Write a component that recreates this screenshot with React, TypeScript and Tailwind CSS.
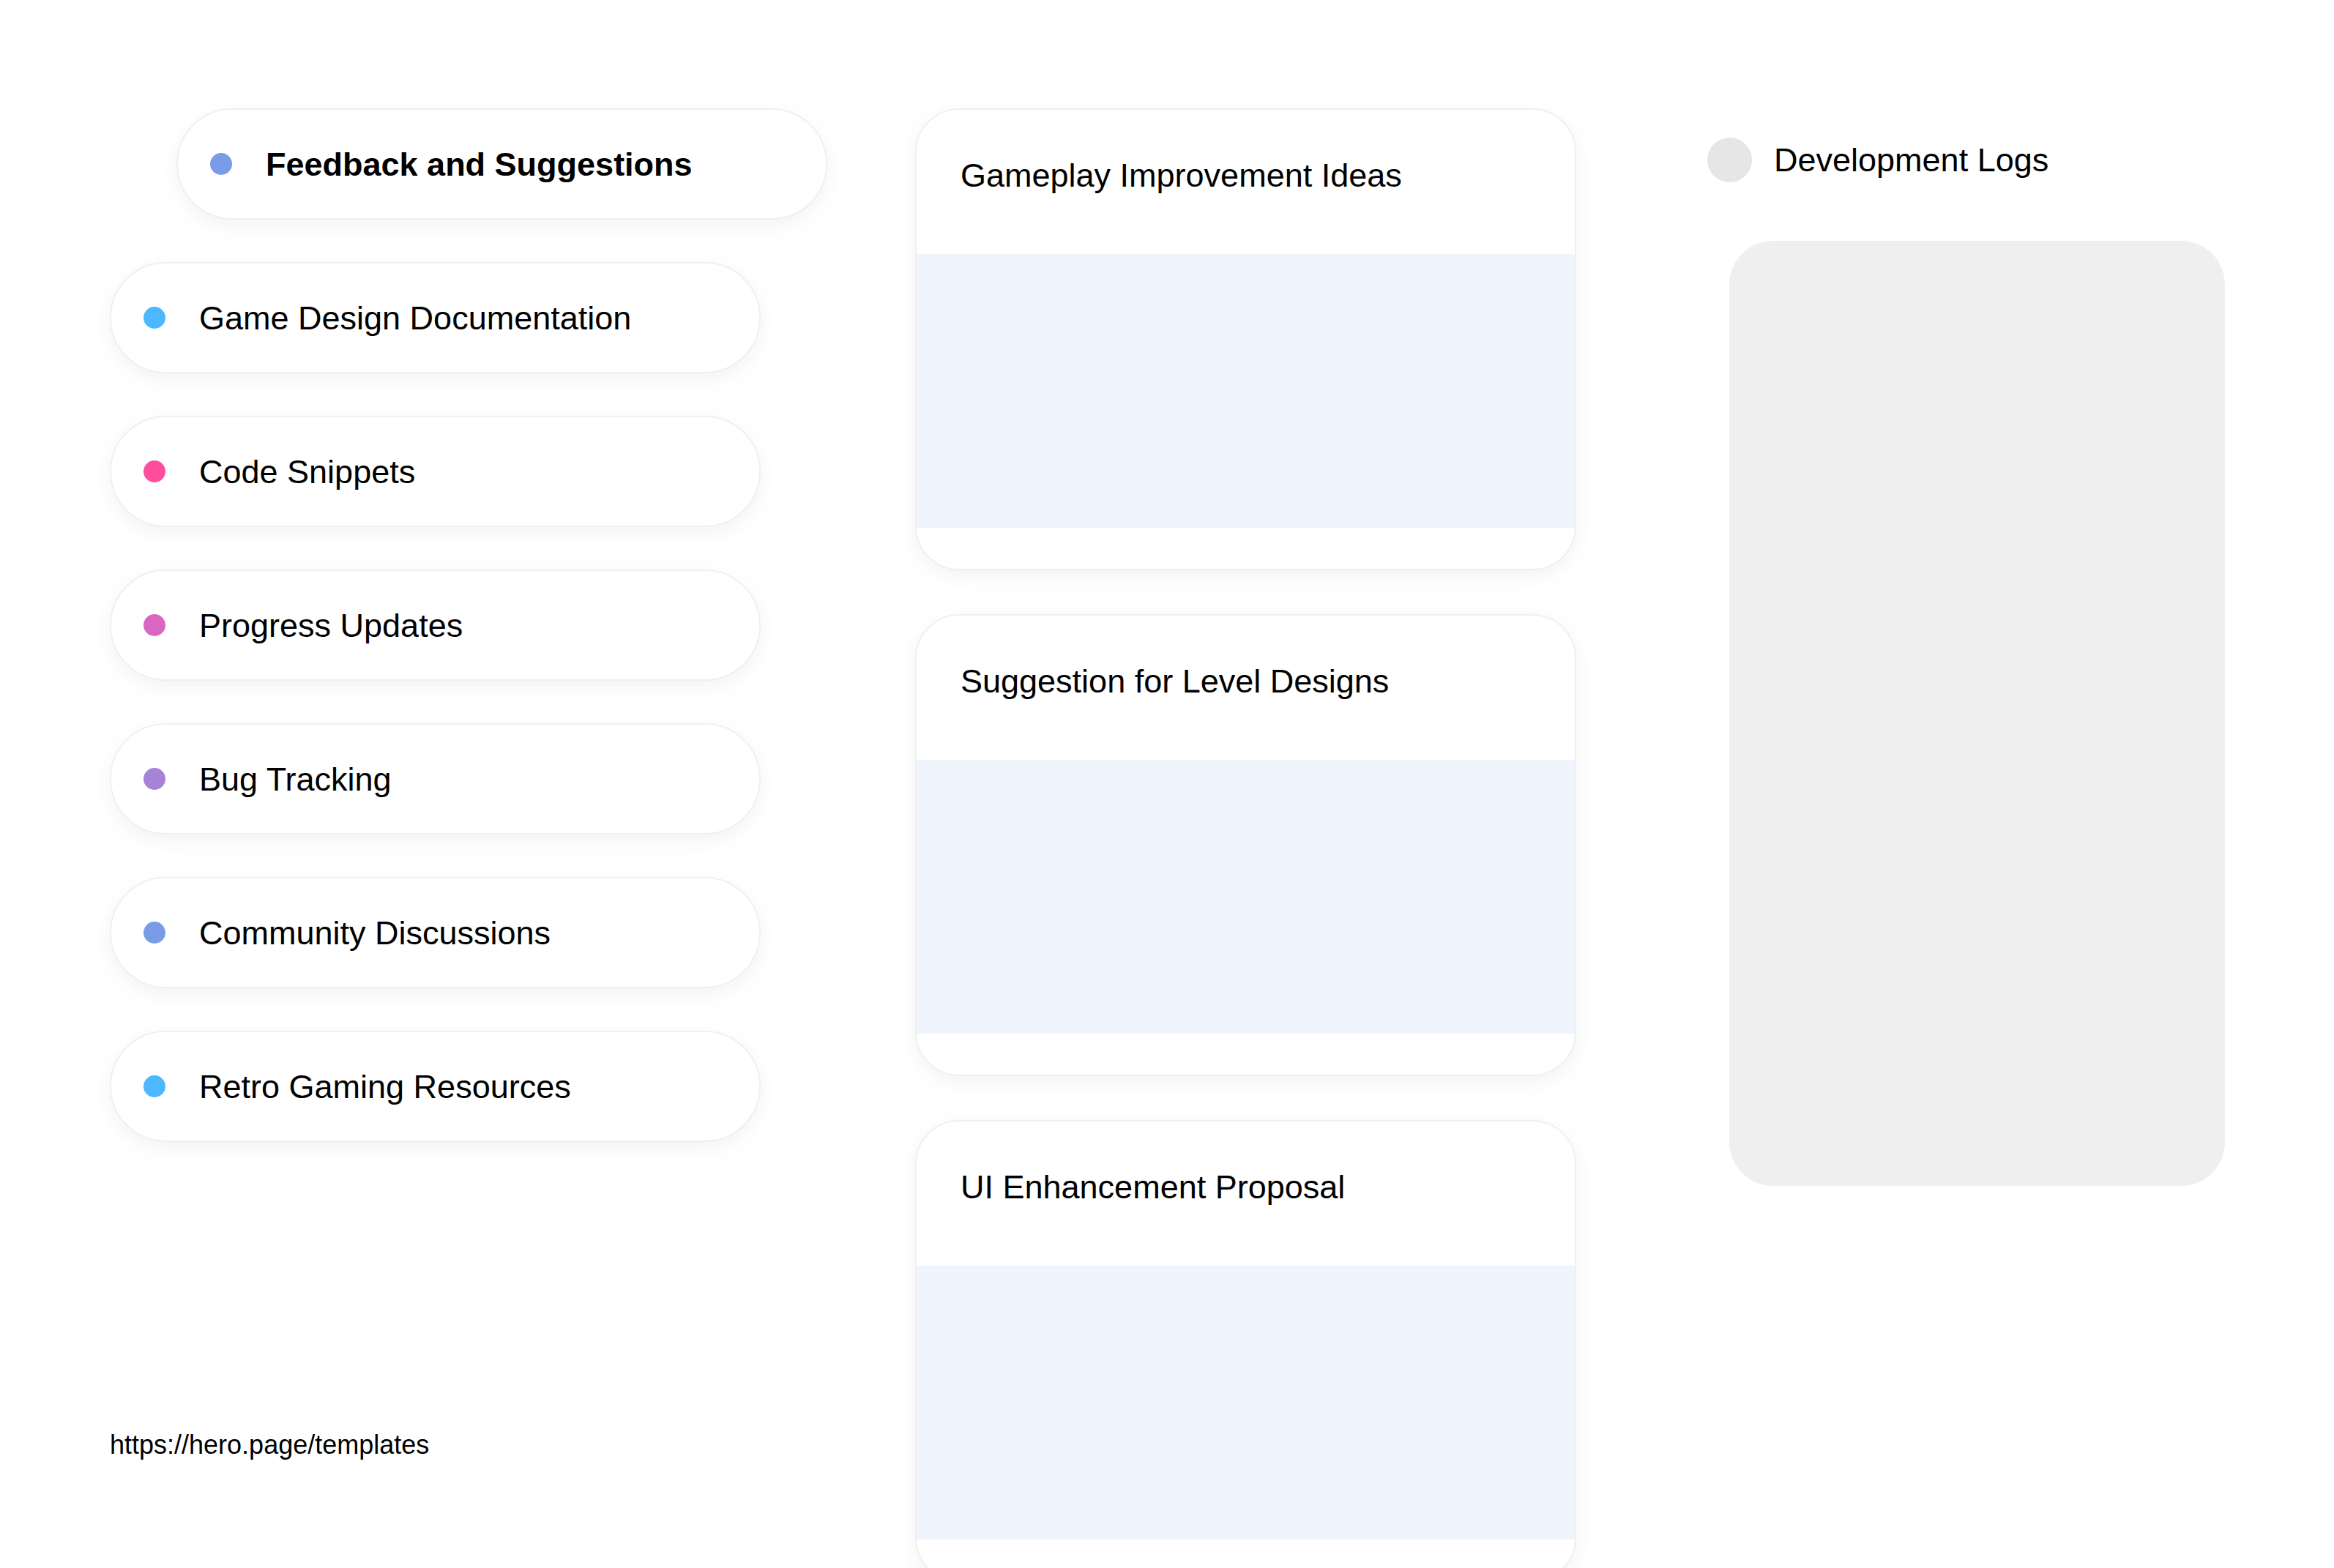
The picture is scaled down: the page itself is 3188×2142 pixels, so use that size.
import React from "react";

const categories = [
  { label: "Game Design Documentation", color: "bg-[#4db8ff]" },
  { label: "Code Snippets", color: "bg-[#ff4d9e]" },
  { label: "Progress Updates", color: "bg-[#d966c0]" },
  { label: "Bug Tracking", color: "bg-[#a583d6]" },
  { label: "Community Discussions", color: "bg-[#7a9ce8]" },
  { label: "Retro Gaming Resources", color: "bg-[#4db8ff]" },
];

const posts = [
  "Gameplay Improvement Ideas",
  "Suggestion for Level Designs",
  "UI Enhancement Proposal",
];

function CategoryPill({
  label,
  color,
  active = false,
}: {
  label: string;
  color: string;
  active?: boolean;
}) {
  return (
    <div
      className={`flex h-[152px] w-[889px] items-center gap-[46px] rounded-[76px] border-2 border-[#f0f0f0] bg-white pl-[44px] shadow-[0_8px_28px_rgba(0,0,0,0.05)] ${
        active ? "ml-[91px]" : ""
      }`}
    >
      <span className={`h-[30px] w-[30px] shrink-0 rounded-full ${color}`} />
      <span
        className={`text-[45px] leading-none text-black ${active ? "font-bold" : ""}`}
      >
        {label}
      </span>
    </div>
  );
}

function PostCard({ title }: { title: string }) {
  return (
    <div className="flex h-[631px] w-[903px] shrink-0 flex-col overflow-hidden rounded-[60px] border-2 border-[#f0f0f0] bg-white shadow-[0_8px_28px_rgba(0,0,0,0.05)]">
      <div className="h-[197px] shrink-0 px-[60px] pt-[58px]">
        <h3 className="text-[45px] leading-[64px] text-black">{title}</h3>
      </div>
      <div className="h-[374px] shrink-0 bg-[#f0f4fc]" />
    </div>
  );
}

export default function App() {
  return (
    <div className="h-[2142px] w-[3188px] overflow-hidden bg-white font-['Liberation_Sans',Arial,sans-serif]">
      <div className="flex pl-[150px] pt-[148px]">
        {/* Categories */}
        <div className="flex h-[1994px] w-[1100px] shrink-0 flex-col">
          <div className="flex flex-col gap-[58px]">
            <CategoryPill label="Feedback and Suggestions" color="bg-[#7a9ce8]" active />
            {categories.map((c) => (
              <CategoryPill key={c.label} label={c.label} color={c.color} />
            ))}
          </div>
          <a
            href="#"
            className="mt-[392px] text-[36px] leading-[44px] text-black"
          >
            https://hero.page/templates
          </a>
        </div>

        {/* Posts */}
        <div className="flex w-[903px] shrink-0 flex-col gap-[60px]">
          {posts.map((p) => (
            <PostCard key={p} title={p} />
          ))}
        </div>

        {/* Logs */}
        <div className="ml-[179px] flex w-[720px] shrink-0 flex-col pt-[40px]">
          <div className="flex items-center gap-[30px]">
            <span className="h-[61px] w-[61px] rounded-full bg-[#e6e6e6]" />
            <span className="text-[45px] leading-none text-black">Development Logs</span>
          </div>
          <div className="ml-[30px] mt-[80px] h-[1291px] w-[677px] rounded-[60px] bg-[#efefef]" />
        </div>
      </div>
    </div>
  );
}
